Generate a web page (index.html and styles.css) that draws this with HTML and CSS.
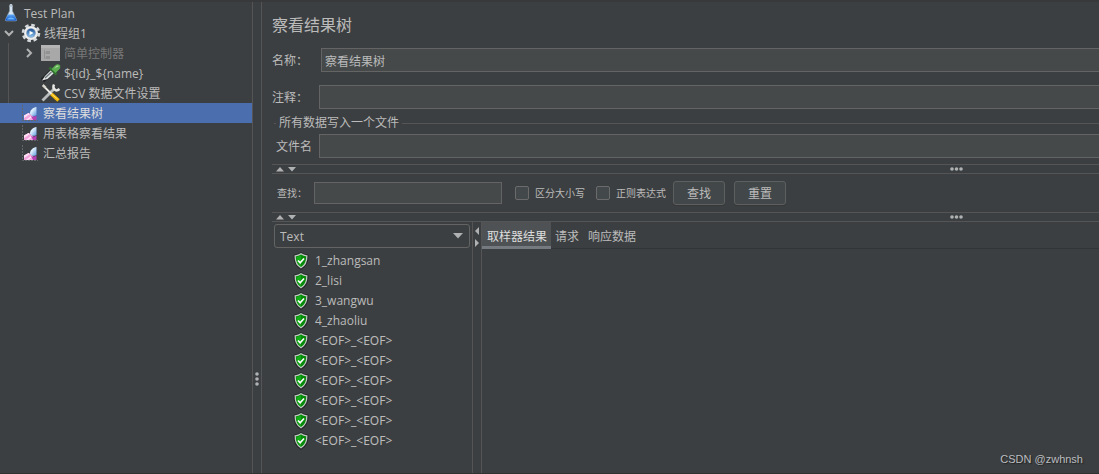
FILE: index.html
```html
<!DOCTYPE html>
<html lang="zh-CN">
<head>
<meta charset="utf-8">
<title>察看结果树</title>
<link rel="stylesheet" href="styles.css">
</head>
<body>
<svg class="defs" aria-hidden="true">
  <defs>
    <linearGradient id="flame" x1="0" y1="0" x2="1" y2="1"><stop offset="0" stop-color="#fff"/><stop offset=".4" stop-color="#d8ebfb"/><stop offset="1" stop-color="#5f9be0"/></linearGradient>
    <linearGradient id="liquid" x1="0" y1="0" x2="0" y2="1"><stop offset="0" stop-color="#5ea8f5"/><stop offset="1" stop-color="#0a4fc0"/></linearGradient>
    <linearGradient id="hub" x1="0" y1="0" x2="0" y2="1"><stop offset="0" stop-color="#1d4f93"/><stop offset="1" stop-color="#8dc3f0"/></linearGradient>
  </defs>
  <symbol id="chart" viewBox="0 0 16 16">
    <path d="M.5 0v15.500H16" fill="none" stroke="#62666b" stroke-dasharray="2 1"/>
    <path d="M2 15v-4.500L6.500 8l3.500 2 4 5z" fill="#f3a6de"/>
    <path d="M2 10.500 6.500 8l1.500 1-6 4zM4 15l5-4 1 1-4 3z" fill="#ffe3f7"/>
    <path d="M14.500 2C11 2.500 8 5 8 8.500c1 2.500 4 3 6.500 1.500z" fill="url(#flame)"/>
    <path d="M9 11c2 1 4 .8 5.500-.5V15H11z" fill="#b43fb4"/>
  </symbol>
  <symbol id="shield" viewBox="0 0 16 18">
    <path d="M8 1.500C6 3 4 3.500 1.800 3.700 1.500 9 3 13.500 8 16.500c5-3 6.500-7.500 6.200-12.800C12 3.500 10 3 8 1.500z" fill="#078b0b" stroke="#25282a" stroke-width="2.400"/>
    <path d="M8 1.800C6 3.200 4 3.700 2.200 3.900 2 9 3.400 13 8 15.800c4.600-2.800 6-6.800 5.800-11.900C12 3.700 10 3.200 8 1.800z" fill="#058a09" stroke="#c2c9c2" stroke-width="1.300"/>
    <path d="M8 3.500v11C5 12.500 3.500 9.500 3.300 5z" fill="#12aa16"/>
    <path d="m5 8.500 2.200 2.300L11 6.500" fill="none" stroke="#fff" stroke-width="1.700"/>
  </symbol>
</svg>
<div class="app">
  <nav class="tree">
    <ul class="rows">
      <li class="row"><svg class="icon flask" viewBox="0 0 16 20"><path d="M6.500 3h3v5l4 8.500q.5 1.500-1 1.500h-9q-1.500 0-1-1.500l4-8.500z" fill="#d5e5f2" stroke="#8293a3" stroke-width=".6"/><path d="M5 11.500h6l2.500 5q.3 1.300-1 1.300h-9q-1.300 0-1-1.300z" fill="url(#liquid)"/><path d="M5 15.500q3-2 6 0l1 1H4z" fill="#69b5ff"/><path d="M6 3.500 7 1h2l1 2.500z" fill="#b7c3cf"/></svg><span>Test Plan</span></li>
      <li class="row level-1"><svg class="chevron" viewBox="0 0 10 10"><path d="m1 3 4 4 4-4"/></svg><svg class="icon" viewBox="0 0 20 20"><circle cx="10" cy="10" r="8" fill="none" stroke="#d5d8db" stroke-width="2.600" stroke-dasharray="3.600 2.683"/><circle cx="10" cy="10" r="7" fill="#eceef0"/><circle cx="10" cy="10" r="4.800" fill="#9aa8b8"/><circle cx="10" cy="10" r="4.300" fill="url(#hub)"/><path d="m8.500 7.800 4 2.200-4 2.200z" fill="#fff"/></svg><span>线程组1</span></li>
      <li class="row level-2 muted guide"><svg class="chevron" viewBox="0 0 10 10"><path d="m3 1 4 4-4 4"/></svg><svg class="icon" viewBox="0 0 20 20"><path d="M0 2h19v16H0z" fill="#a8a8a8"/><path d="M0 2h19v3H0z" fill="#b5b5b5"/><path d="M3.500 7v8.500M4 10h3M4 15h3" fill="none" stroke="#909090"/><path d="M5 8h4v3H5zM5 13h4v3H5z" fill="#929292"/></svg><span>简单控制器</span></li>
      <li class="row level-2 guide"><span class="chevron"></span><svg class="icon" viewBox="0 0 20 20"><path d="M1.500 17.500 11.500 8" stroke="#202224" stroke-width="5"/><path d="M1 17.500 4 13l6-6 3 3-6.500 6z" fill="#dfe3e4"/><path d="m4 15 6.500-6" stroke="#6f777b" stroke-width="1.400"/><path d="m8.500 4.500 7 7" stroke="#2f6e2e" stroke-width="2.600"/><path d="m10.500 6 3.500-3.500q3-2.500 5 0 .8 2-1 4L14.500 10z" fill="#5caf50"/><path d="m13 5.500 3-3 2 .5z" fill="#b8e3a7"/></svg><span>${id}_${name}</span></li>
      <li class="row level-2 guide"><span class="chevron"></span><svg class="icon" viewBox="0 0 20 20"><path d="M1.500 17.500 14 5" stroke="#b9bcbd" stroke-width="2.800"/><path d="M13 1.500q-1.500 3 .5 5t5-.5" fill="none" stroke="#e8e8e5" stroke-width="2.400"/><path d="m2 2.500 9 9" stroke="#f0eee8" stroke-width="1.800"/><path d="m1 3 1.500-2 3 3L4 5.500z" fill="#d8d5cb"/><path d="m10.500 11 7 6.500" stroke="#f2b705" stroke-width="3.400"/><path d="m10.500 11 6 5" stroke="#ffe06c"/></svg><span>CSV 数据文件设置</span></li>
      <li class="row leaf selected"><svg class="icon chart"><use href="#chart"/></svg><span>察看结果树</span></li>
      <li class="row leaf"><svg class="icon chart"><use href="#chart"/></svg><span>用表格察看结果</span></li>
      <li class="row leaf"><svg class="icon chart"><use href="#chart"/></svg><span>汇总报告</span></li>
    </ul>
  </nav>
  <div class="divider"><svg class="grip" viewBox="0 0 4 14"><circle cx="2" cy="2" r="1.800"/><circle cx="2" cy="7" r="1.800"/><circle cx="2" cy="12" r="1.800"/></svg></div>
  <main class="panel">
    <h1 class="title">察看结果树</h1>
    <div class="field name-field"><label for="name">名称：</label><input id="name" type="text" value="察看结果树"></div>
    <div class="field"><label for="comment">注释：</label><input id="comment" type="text"></div>
    <section class="group">
      <h2 class="legend">所有数据写入一个文件</h2>
      <div class="field file-field"><label for="file">文件名</label><input id="file" type="text"></div>
    </section>
    <div class="splitbar"><svg class="arrows" viewBox="0 0 20 6"><path d="M0 5.500 4 1l4 4.500zM12 1h8l-4 4.500z"/></svg><svg class="dots" viewBox="0 0 14 4"><circle cx="2" cy="2" r="1.800"/><circle cx="6.500" cy="2" r="1.800"/><circle cx="11" cy="2" r="1.800"/></svg></div>
    <form class="search">
      <label class="search-label" for="query">查找：</label>
      <input class="query" id="query" type="text">
      <label class="check"><input type="checkbox">区分大小写</label>
      <label class="check"><input type="checkbox">正则表达式</label>
      <button type="button">查找</button>
      <button type="button">重置</button>
    </form>
    <div class="splitbar"><svg class="arrows" viewBox="0 0 20 6"><path d="M0 5.500 4 1l4 4.500zM12 1h8l-4 4.500z"/></svg><svg class="dots" viewBox="0 0 14 4"><circle cx="2" cy="2" r="1.800"/><circle cx="6.500" cy="2" r="1.800"/><circle cx="11" cy="2" r="1.800"/></svg></div>
    <div class="results">
      <section class="samples">
        <div class="combo"><select aria-label="Text"><option>Text</option></select><svg class="caret" viewBox="0 0 10 6"><path d="M0 0h10L5 5.500z"/></svg></div>
        <ul class="rows sample-rows">
          <li class="row"><svg class="shield"><use href="#shield"/></svg><span>1_zhangsan</span></li>
          <li class="row"><svg class="shield"><use href="#shield"/></svg><span>2_lisi</span></li>
          <li class="row"><svg class="shield"><use href="#shield"/></svg><span>3_wangwu</span></li>
          <li class="row"><svg class="shield"><use href="#shield"/></svg><span>4_zhaoliu</span></li>
          <li class="row eof"><svg class="shield"><use href="#shield"/></svg><span>&lt;EOF&gt;_&lt;EOF&gt;</span></li>
          <li class="row eof"><svg class="shield"><use href="#shield"/></svg><span>&lt;EOF&gt;_&lt;EOF&gt;</span></li>
          <li class="row eof"><svg class="shield"><use href="#shield"/></svg><span>&lt;EOF&gt;_&lt;EOF&gt;</span></li>
          <li class="row eof"><svg class="shield"><use href="#shield"/></svg><span>&lt;EOF&gt;_&lt;EOF&gt;</span></li>
          <li class="row eof"><svg class="shield"><use href="#shield"/></svg><span>&lt;EOF&gt;_&lt;EOF&gt;</span></li>
          <li class="row eof"><svg class="shield"><use href="#shield"/></svg><span>&lt;EOF&gt;_&lt;EOF&gt;</span></li>
        </ul>
      </section>
      <div class="side-split"><svg viewBox="0 0 6 20"><path d="M5 0v8L1 4zM1 12v8l4-4z"/></svg></div>
      <section class="detail">
        <div class="tabs" role="tablist">
          <button class="tab active" role="tab" aria-selected="true" type="button">取样器结果</button>
          <button class="tab" role="tab" type="button">请求</button>
          <button class="tab" role="tab" type="button">响应数据</button>
        </div>
      </section>
    </div>
  </main>
  <div class="watermark">CSDN @zwhnsh</div>
</div>
</body>
</html>
```
FILE: styles.css
```css
* { box-sizing: border-box; }

body {
  margin: 0;
  background: #3c3f41;
  color: #bbb;
  font: 12px/20px "Open Sans", "Noto Sans CJK SC", sans-serif;
}

button, input, select { font: inherit; color: inherit; margin: 0; }

.defs { position: absolute; width: 0; height: 0; }

.app {
  position: relative;
  display: flex;
  min-height: 100vh;
  border-top: 2px solid #37393b;
  border-bottom: 1px solid #303234;
  overflow: hidden;
}

.tree { flex: 0 0 252px; padding-top: 1px; }
.rows { list-style: none; margin: 0; padding: 0; }
.row { display: flex; align-items: center; height: 20px; white-space: nowrap; }
.tree .row > span { padding-top: 2px; }
.icon { width: 20px; height: 20px; flex: none; margin-right: 3px; }
.flask { width: 16px; margin: 0 5px 0 3px; }
.chevron { width: 10px; height: 10px; flex: none; margin-right: 7px; fill: none; stroke: #b0b2b3; stroke-width: 2; }
.level-1 { padding-left: 4px; }
.level-2 { padding-left: 24px; }
.leaf { padding-left: 22px; }
.chart { width: 16px; height: 16px; margin-right: 5px; }
.muted { color: #777; }
.guide { background: linear-gradient(#555, #555) 8px 0 / 1px 100% no-repeat; }
.selected { background: #4b6eaf; color: #ddd; }

.divider {
  flex: 0 0 10px;
  display: flex;
  justify-content: center;
  border: solid #555;
  border-width: 0 1px;
}
.grip { width: 4px; height: 14px; margin-top: 370px; fill: #afb1b3; }

.panel { flex: 1; min-width: 0; display: flex; flex-direction: column; padding-left: 10px; }
.title { margin: 13px 0 13px; font-size: 16px; line-height: 20px; font-weight: 400; }
.field { display: flex; align-items: center; margin-bottom: 13px; }
.field label { flex: 0 0 47px; padding-top: 2px; }
.name-field label { flex-basis: 49px; }
.field input, .query {
  flex: 1;
  min-width: 0;
  height: 24px;
  padding: 2px 3px 0;
  border: 1px solid #646464;
  background: #45494a;
  outline: 0;
}
.field input { border-right: 0; }

.group { margin-top: -9px; }
.legend {
  display: flex;
  align-items: center;
  gap: 3px;
  margin: 0 0 1px 2px;
  font-size: 12px;
  font-weight: 400;
}
.legend::before, .legend::after { content: ""; height: 1px; background: #555; }
.legend::before { width: 2px; }
.legend::after { flex: 1; }
.file-field { margin-bottom: 6px; }
.file-field label { padding-left: 4px; }

.splitbar {
  flex: none;
  display: flex;
  align-items: center;
  justify-content: space-between;
  height: 10px;
  padding: 0 135px 0 4px;
  border: solid #555;
  border-width: 1px 0;
  fill: #afb1b3;
}
.arrows { width: 20px; height: 6px; }
.dots { width: 14px; height: 4px; }

.search { display: flex; align-items: center; height: 38px; padding-left: 5px; font-size: 10px; }
.search-label { width: 37px; }
.query { flex: 0 0 188px; height: 22px; margin-right: 13px; }
.check { display: flex; align-items: center; gap: 6px; width: 81px; white-space: nowrap; }
.check input {
  appearance: none;
  width: 14px;
  height: 14px;
  border: 1px solid #6b6b6b;
  border-radius: 2px;
  background: #43494a;
}
.search button {
  width: 52px;
  height: 24px;
  padding: 2px 0 0;
  margin-right: 9px;
  border: 1px solid #5e6060;
  border-radius: 3px;
  background: #424749;
  box-shadow: 0 1px #363839;
  font-size: 12px;
  line-height: 20px;
}
.check + button { margin-left: -4px; }

.results { flex: 1; display: flex; }
.samples { flex: 0 0 200px; }
.combo { display: grid; align-items: center; margin: 2px 2px 3px; }
.combo > * { grid-area: 1 / 1; }
.combo select {
  appearance: none;
  width: 100%;
  height: 24px;
  padding: 2px 5px 0;
  border: 1px solid #646464;
  border-radius: 3px;
  background: #3c3f41;
}
.caret { width: 10px; height: 6px; justify-self: end; margin-right: 7px; fill: #afb1b3; pointer-events: none; }
.sample-rows { padding-left: 21px; }
.shield { width: 16px; height: 18px; margin-right: 6px; }
.eof { font-family: "Noto Sans", sans-serif; }
.side-split { flex: 0 0 10px; border: solid #555; border-width: 0 1px; }
.side-split svg { display: block; width: 6px; height: 20px; margin: 5px 1px; fill: #afb1b3; }

.detail { flex: 1; min-width: 0; }
.tabs { display: flex; height: 27px; border-bottom: 1px solid #323435; }
.tab { height: 27px; padding: 2px 5px 0 4px; border: 0; background: none; }
.tab.active { padding: 5px 4px 0 5px; border-bottom: 3px solid #747a80; background: #4e5254; color: #ddd; }

.watermark {
  position: absolute;
  right: 16px;
  bottom: 4px;
  color: #bcbec0;
  font: 11px/20px "Liberation Sans", sans-serif;
  text-shadow: 1px 1px 1px #222;
}
```
